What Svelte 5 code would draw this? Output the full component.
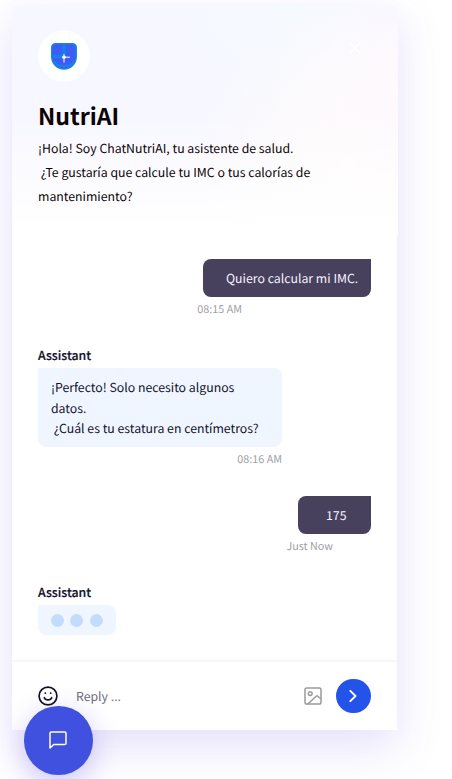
<script>
  const sent = {
    first: { text: 'Quiero calcular mi IMC.', time: '08:15 AM' },
    second: { text: '175', time: 'Just Now' }
  };
</script>

<main class="page">
  <section class="card">
    <header class="intro">
      <div class="top">
        <div class="avatar">
          <svg width="26" height="27" viewBox="0 0 26 27">
            <path d="M5 .8H21Q25.2.8 25.2 5V13.5C25.2 20.6 19.6 26 13 26S.8 20.6.8 13.5V5Q.8.8 5 .8Z" fill="#3b5cf5" stroke="#1688d8" stroke-width="1.6" />
            <path d="M13 2V13M2 13.5H11" stroke="#1680e8" stroke-width="3.5" fill="none" />
            <path d="M3 18C7 25 19 25 23 18" stroke="#2878f0" stroke-width="2" fill="none" />
            <path d="M13 11V19.5M11 14.2H19" stroke="#fff" stroke-width="1" />
            <circle cx="13" cy="14.2" r="1.8" fill="#fff" />
          </svg>
        </div>
        <svg class="close" width="14" height="14" viewBox="0 0 14 14">
          <path d="M2 2L12 12M12 2L2 12" stroke="#fff" stroke-width="1.5" stroke-linecap="round" />
        </svg>
      </div>
      <h1>NutriAI</h1>
      <p>¡Hola! Soy ChatNutriAI, tu asistente de salud.<br />&nbsp;¿Te gustaría que calcule tu IMC o tus calorías de<br />mantenimiento?</p>
    </header>

    <div class="chat">
      <div class="user">
        <div class="bubble dark">{sent.first.text}</div>
        <time class="t1">{sent.first.time}</time>
      </div>
      <div class="bot">
        <strong>Assistant</strong>
        <div class="bubble light">¡Perfecto! Solo necesito algunos<br />datos.<br />&nbsp;¿Cuál es tu estatura en centímetros?</div>
        <time class="t2">08:16 AM</time>
      </div>
      <div class="user second">
        <div class="bubble dark short">{sent.second.text}</div>
        <time class="t3">{sent.second.time}</time>
      </div>
      <div class="bot last">
        <strong>Assistant</strong>
        <div class="typing"><i></i><i></i><i></i></div>
      </div>
    </div>

    <footer>
      <svg class="smile" width="20" height="20" viewBox="0 0 20 20" fill="none" stroke="#12102a" stroke-width="1.7" stroke-linecap="round">
        <circle cx="10" cy="10" r="8.9" />
        <path d="M6.3 11.7C7.5 14.6 12.5 14.6 13.7 11.7" />
        <path d="M7.3 7.1V7.2M12.7 7.1V7.2" stroke-width="1.7" />
      </svg>
      <span class="reply">Reply ...</span>
      <svg class="image" width="18" height="18" viewBox="0 0 18 18" fill="none" stroke="#9b9b9b" stroke-width="1.5" stroke-linejoin="round">
        <rect x="1" y="1" width="16" height="16" rx="1.8" />
        <circle cx="6.2" cy="6.6" r="1.9" />
        <path d="M3.8 17L12.2 9.2Q13 8.5 13.8 9.2L17 12" />
      </svg>
      <button class="send" aria-label="Send">
        <svg width="8" height="14" viewBox="0 0 8 14"><path d="M1.3 1.8L6.5 7L1.3 12.2" fill="none" stroke="#fff" stroke-width="1.9" stroke-linecap="round" stroke-linejoin="round" /></svg>
      </button>
    </footer>
  </section>
  <button class="fab" aria-label="Chat">
    <svg width="18" height="18" viewBox="0 0 18 18"><path d="M2.3 1H15.7Q17 1 17 2.3V12.3Q17 13.6 15.7 13.6H4.6L1 17V2.3Q1 1 2.3 1Z" fill="none" stroke="#fff" stroke-width="1.5" stroke-linejoin="round" /></svg>
  </button>
</main>

<style>
  :global(body) { background: #fff; }
  .page {
    position: relative;
    box-sizing: border-box;
    width: 452px;
    height: 779px;
    padding: 5px 0 0 12px;
    overflow: hidden;
    font-family: "Noto Sans CJK SC", "Noto Sans", sans-serif;
    font-size: 12.3px;
    text-rendering: geometricPrecision;
    color: #12102a;
  }
  .card {
    display: flex;
    flex-direction: column;
    width: 384.5px;
    height: 724.5px;
    background: #fff;
    border-radius: 8px 8px 0 0;
    box-shadow: 0 16px 46px rgba(96, 72, 230, 0.17);
  }
  .intro {
    box-sizing: border-box;
    width: 385.5px;
    height: 230px;
    padding: 25px 26px 0;
    border-radius: 8px 8px 0 0;
    background:
      linear-gradient(180deg, transparent 48%, #fff 96%),
      radial-gradient(circle at 102% 40%, #fff9fe 0, rgba(255, 249, 254, 0) 34%),
      radial-gradient(circle at 87% 68%, #fffcfa 0, rgba(255, 252, 250, 0) 42%),
      radial-gradient(ellipse at 72% 0, #f5faff 0, rgba(245, 250, 255, 0) 38%),
      #f7f7ff;
    color: #0d0304;
  }
  .top { display: flex; justify-content: space-between; }
  .avatar {
    display: flex;
    align-items: center;
    justify-content: center;
    width: 52px;
    height: 52px;
    border-radius: 50%;
    background: #fff;
  }
  .close { margin: 11px 10px 0 0; }
  h1 {
    margin: 14px 0 0;
    font-size: 23.1px;
    line-height: 38px;
    font-weight: 700;
  }
  p {
    margin: 1.5px 0 0;
    line-height: 24px;
    white-space: nowrap;
  }
  .chat {
    display: flex;
    flex-direction: column;
    height: 425px;
    flex: none;
    box-sizing: border-box;
    padding: 24px 25.5px 0 26px;
  }
  .user { display: flex; flex-direction: column; align-items: flex-end; }
  .bubble { box-sizing: border-box; }
  .dark {
    width: 168px;
    height: 38px;
    padding-left: 23px;
    line-height: 39px;
    white-space: nowrap;
    color: #f6f4ff;
    background: #48415e;
    border-radius: 8px 0 8px 8px;
  }
  .short { width: 73px; padding-left: 28px; }
  time {
    font-size: 10.8px;
    line-height: 18px;
    color: #a0a0a5;
    white-space: nowrap;
  }
  .t1 { margin: 3px 129px 0 0; }
  .bot { display: flex; flex-direction: column; align-items: flex-start; margin-top: 27px; }
  strong {
    font-size: 12.3px;
    line-height: 20px;
    font-weight: 500;
    -webkit-text-stroke: 0.2px currentColor;
  }
  .light {
    width: 244px;
    height: 79px;
    margin-top: 3px;
    padding: 9px 13px;
    line-height: 20.5px;
    white-space: nowrap;
    background: #eff6ff;
    border-radius: 0 8px 8px 8px;
  }
  .t2 { width: 244px; margin-top: 3px; text-align: right; }
  .second { margin-top: 28px; }
  .t3 { margin: 3px 38px 0 0; }
  .last { margin-top: 27px; }
  .typing {
    display: flex;
    align-items: center;
    gap: 6.8px;
    box-sizing: border-box;
    width: 78px;
    height: 30px;
    margin-top: 3px;
    padding-left: 12.5px;
    background: #eff6ff;
    border-radius: 0 8px 8px 8px;
  }
  .typing i { width: 13px; height: 13px; border-radius: 50%; background: #c3dcfc; }
  footer {
    display: flex;
    align-items: center;
    box-sizing: border-box;
    flex: none;
    height: 69.5px;
    padding: 0 26px;
    border-top: 2px solid #f7f7f9;
  }
  .reply { margin-left: 18px; color: #6e6c7a; }
  .image { margin-left: auto; }
  button { display: flex; align-items: center; justify-content: center; padding: 0; border: 0; border-radius: 50%; }
  .send { width: 34.5px; height: 34.5px; margin-left: 14px; background: #2453ea; }
  .fab {
    position: absolute;
    left: 24px;
    top: 706px;
    width: 68.5px;
    height: 68.5px;
    background: #4050df;
    box-shadow: 0 8px 28px rgba(80, 50, 225, 0.28);
  }
</style>
